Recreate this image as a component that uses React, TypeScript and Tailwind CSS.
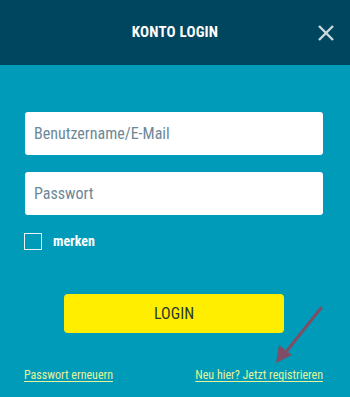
import React from "react";

const font = { fontFamily: '"Roboto Condensed", "Liberation Sans Narrow", Roboto, sans-serif' };

export default function App() {
  return (
    <div className="relative w-[350px] h-[397px] overflow-hidden bg-[#009bb9]" style={font}>
      <div className="relative h-[65px] bg-[#00465f] flex items-center justify-center">
        <span className="text-white font-bold text-[15px] tracking-[0.2px]">KONTO LOGIN</span>
        <svg className="absolute right-[15px] top-[24px]" width="18" height="18" viewBox="0 0 18 18">
          <path d="M2 2 L16 16 M16 2 L2 16" stroke="#c9dade" strokeWidth="2.4" strokeLinecap="butt" />
        </svg>
      </div>
      <div className="flex flex-col pl-[25px] pr-[27px] pt-[47px]">
        <div className="h-[43px] bg-white rounded-[3px] flex items-center px-[9px] text-[16px] text-[#6c8897]">
          Benutzername/E-Mail
        </div>
        <div className="mt-[17px] h-[43px] bg-white rounded-[3px] flex items-center px-[9px] text-[16px] text-[#6c8897]">
          Passwort
        </div>
        <div className="mt-[16px] flex items-center -ml-[1px]">
          <div className="w-[18px] h-[17px] border border-[#e8f4f6]" />
          <span className="ml-[11px] text-white font-bold text-[14px]">merken</span>
        </div>
        <div className="mt-[42px] self-center w-[220px] h-[39px] bg-[#ffee00] rounded-[4px] flex items-center justify-center text-[#2a3a2a] text-[16px]">
          LOGIN
        </div>
        <div className="mt-[33px] flex justify-between items-center -ml-[1px]">
          <span className="text-[12px] text-[#e4f49a] underline underline-offset-2">Passwort erneuern</span>
          <span className="text-[12px] text-[#e4f49a] underline underline-offset-2">Neu hier? Jetzt registrieren</span>
        </div>
      </div>
      <svg className="absolute left-0 top-0 pointer-events-none" width="350" height="397" viewBox="0 0 350 397">
        <line x1="321" y1="308" x2="282" y2="357" stroke="#7d4e66" strokeWidth="3" strokeLinecap="round" />
        <path d="M276 363 L279 345 L292 355 Z" fill="#7d4e66" />
      </svg>
    </div>
  );
}
